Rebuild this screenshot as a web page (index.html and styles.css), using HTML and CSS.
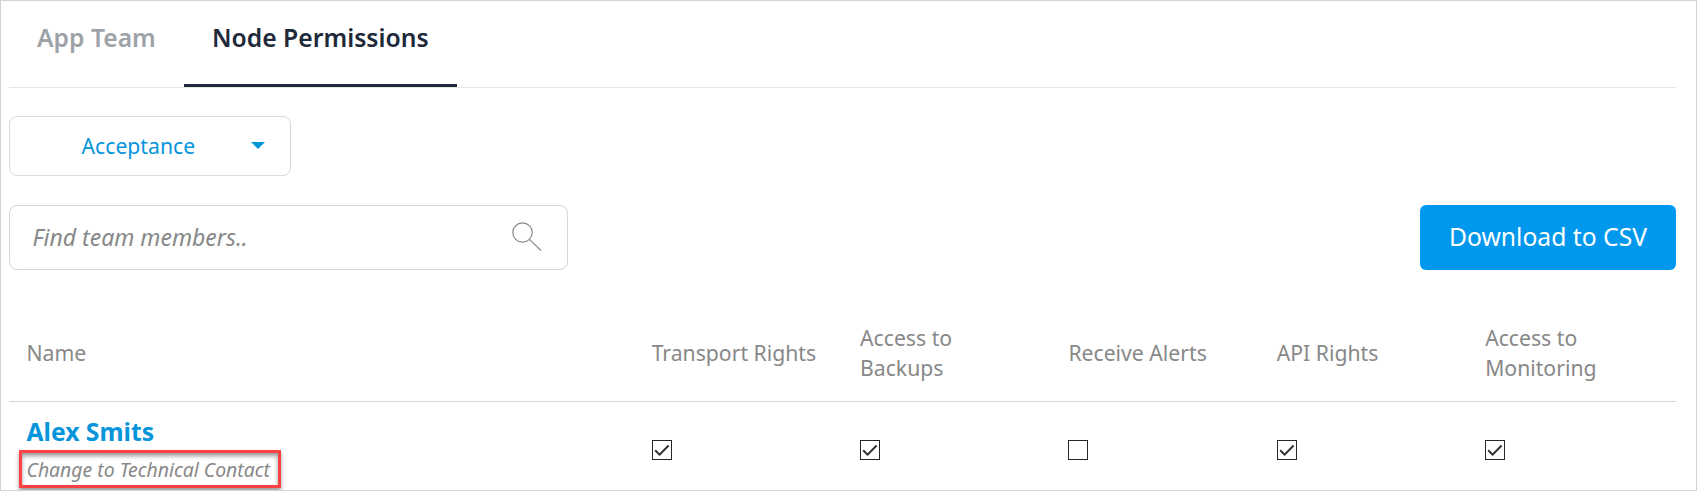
FILE: index.html
```html
<!DOCTYPE html>
<html lang="en">
<head>
<meta charset="utf-8">
<title>Node Permissions</title>
<link rel="stylesheet" href="styles.css">
</head>
<body>
<main class="panel">
  <nav class="tabs">
    <a class="tab">App Team</a>
    <a class="tab tab-active"><span class="tab-label">Node Permissions</span></a>
  </nav>
  <button class="environment"><span class="environment-label">Acceptance</span><svg class="caret" viewBox="0 0 14 7"><path d="M0 0H14L7 7Z" fill="#0595db"/></svg></button>
  <div class="toolbar">
    <div class="search">
      <span class="search-text">Find team members..</span>
      <svg class="search-icon" viewBox="0 0 30 30" fill="none" stroke="#888" stroke-width="1.2"><circle cx="10.5" cy="10.5" r="9.7"/><path d="M17.3 17.4L29 28.5"/></svg>
    </div>
    <button class="download"><span class="download-label">Download to CSV</span></button>
  </div>
  <section class="table">
    <div class="row head">
      <div class="cell"><span class="t-name">Name</span></div>
      <div class="cell"><span>Transport Rights</span></div>
      <div class="cell"><span>Access to<br>Backups</span></div>
      <div class="cell"><span>Receive Alerts</span></div>
      <div class="cell"><span>API Rights</span></div>
      <div class="cell"><span>Access to<br>Monitoring</span></div>
    </div>
    <div class="row member">
      <div class="cell person"><span class="person-name">Alex Smits</span><span class="change">Change to Technical Contact</span></div>
      <div class="cell"><span class="check"><svg viewBox="0 0 18 18"><path d="M2.2 9.3L6.6 13.6L15.6 4.5"/></svg></span></div>
      <div class="cell"><span class="check"><svg viewBox="0 0 18 18"><path d="M2.2 9.3L6.6 13.6L15.6 4.5"/></svg></span></div>
      <div class="cell"><span class="check"></span></div>
      <div class="cell"><span class="check"><svg viewBox="0 0 18 18"><path d="M2.2 9.3L6.6 13.6L15.6 4.5"/></svg></span></div>
      <div class="cell"><span class="check"><svg viewBox="0 0 18 18"><path d="M2.2 9.3L6.6 13.6L15.6 4.5"/></svg></span></div>
    </div>
  </section>
</main>
</body>
</html>
```
FILE: styles.css
```css
* { box-sizing: border-box; }
body {
  margin: 0;
  background: #fff;
  font-family: "Noto Sans", sans-serif;
  color: #888;
  overflow: hidden;
}
button { font: inherit; margin: 0; }
svg { display: block; }
.panel {
  width: 1697px;
  height: 491px;
  padding: 0 20px 0 8px;
  border: 1px solid #d3d3d3;
  overflow: hidden;
}
.tabs {
  display: flex;
  height: 87px;
  border-bottom: 1px solid #e5e5e5;
}
.tab {
  width: 175px;
  height: 86px;
  padding: 20px 0 0 28px;
  font-size: 24.7px;
  line-height: 34px;
  font-weight: 600;
  color: #9ea3a9;
  white-space: nowrap;
}
.tab-active {
  width: 273px;
  color: #20293a;
  border-bottom: 3px solid #20293a;
}
.environment {
  display: flex;
  align-items: center;
  width: 282px;
  height: 60px;
  margin-top: 28px;
  padding: 0 25px 0 71.5px;
  justify-content: space-between;
  border: 1px solid #dadada;
  border-radius: 8px;
  background: #fff;
  color: #0595db;
  font-size: 21.2px;
}
.environment-label { padding-bottom: 2px; }
.caret { width: 14px; height: 7px; margin-top: -2px; }
.toolbar {
  display: flex;
  justify-content: space-between;
  margin-top: 29px;
}
.search {
  display: flex;
  align-items: center;
  justify-content: space-between;
  width: 559px;
  height: 65px;
  padding: 0 25px 0 22.5px;
  border: 1px solid #d5d5d5;
  border-radius: 8px;
  font-size: 23px;
  font-style: italic;
}
.search-text { padding-bottom: 2px; }
.search-icon { width: 30px; height: 30px; margin-top: -2px; }
.download {
  width: 256px;
  height: 65px;
  padding: 0 0 3px;
  border: 0;
  border-radius: 6px;
  background: #0098ed;
  color: #fff;
  font-size: 24.7px;
}
.row {
  display: grid;
  grid-template-columns: 37.5% repeat(5, 12.5%);
}
.cell {
  display: flex;
  align-items: center;
  padding-left: 17.5px;
}
.head {
  height: 132px;
  padding-top: 34px;
  border-bottom: 1px solid #d5d5d5;
  font-size: 21.2px;
  line-height: 30px;
  white-space: nowrap;
}
.member { height: 96px; }
.person {
  flex-direction: column;
  align-items: flex-start;
  justify-content: flex-start;
  padding: 13px 0 0 10px;
}
.person-name {
  padding-left: 7.5px;
  font-size: 24.7px;
  line-height: 34px;
  font-weight: 700;
  color: #0595db;
}
.change {
  width: 262px;
  height: 38px;
  margin-top: 1px;
  padding-left: 4.5px;
  border: 3px solid #fd4144;
  box-shadow: 0 3px 4px rgba(0, 0, 0, .4), inset 0 3px 4px rgba(0, 0, 0, .4);
  font-size: 19.4px;
  line-height: 34px;
  font-style: italic;
  white-space: nowrap;
}
.check {
  width: 20px;
  height: 20px;
  border: 1px solid #262626;
}
.check path { fill: none; stroke: #303030; stroke-width: 2; }
```
